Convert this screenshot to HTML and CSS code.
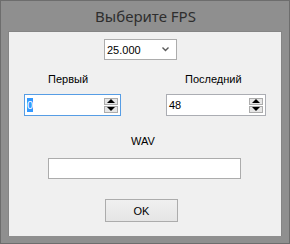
FILE: index.html
```html
<!DOCTYPE html>
<html>
<head>
    <title>Выберите FPS</title>
    <link rel="stylesheet" href="styles.css">
</head>
<body>
    <div class="window">
        <div class="title">Выберите FPS</div>
        <div class="client">
            <div class="combo-row">
                <div class="combo">
                    <span>25.000</span>
                    <svg class="chevron" width="7" height="5" viewBox="0 0 7 5">
                        <path d="M0.5 0.5 L3.5 3.5 L6.5 0.5" fill="none" stroke="#5a5a5a" stroke-width="1.4"/>
                    </svg>
                </div>
            </div>
            <div class="pair">
                <div class="label label-first">Первый</div>
                <div class="label label-last">Последний</div>
                <div class="spin focused">
                    <span class="value"><span class="selected">0</span></span>
                    <div class="arrows">
                        <div class="arrow up"></div>
                        <div class="arrow down"></div>
                    </div>
                </div>
                <div class="spin">
                    <span class="value">48</span>
                    <div class="arrows">
                        <div class="arrow up"></div>
                        <div class="arrow down"></div>
                    </div>
                </div>
            </div>
            <div class="wav-label">WAV</div>
            <div class="wav-row">
                <div class="wav-input"></div>
            </div>
            <div class="ok-row">
                <button class="ok">OK</button>
            </div>
        </div>
    </div>
</body>
</html>
```
FILE: styles.css
```css
body {
    margin: 0;
    background-color: #8f8f8f;
    font-family: "Liberation Sans", Arial, sans-serif;
    font-size: 11px;
    color: #000;
}
.window {
    width: 290px;
    height: 244px;
    box-sizing: border-box;
    background-color: #8f8f8f;
    border: 1px solid #6d6d6d;
    display: flex;
    flex-direction: column;
}
.title {
    height: 30px;
    line-height: 30px;
    text-align: center;
    font-family: "Noto Sans", sans-serif;
    font-size: 15px;
    color: #2e2e2e;
    padding-left: 1px;
}
.client {
    margin: 0 7px;
    height: 205px;
    box-sizing: border-box;
    background-color: #f0f0f0;
    border: 1px solid #858585;
    border-bottom: none;
    display: flex;
    flex-direction: column;
}
.combo-row {
    display: flex;
    padding-left: 95px;
    padding-top: 7px;
}
.combo {
    width: 73px;
    height: 21px;
    box-sizing: border-box;
    border: 1px solid #acacac;
    background-color: #fff;
    display: flex;
    align-items: center;
    justify-content: space-between;
    padding: 0 7px 0 2px;
}
.pair {
    display: grid;
    grid-template-columns: 97px 100px;
    column-gap: 45px;
    row-gap: 8px;
    padding-left: 15px;
    padding-top: 13px;
}
.label {
    height: 13px;
    line-height: 13px;
}
.label-first {
    padding-left: 24px;
}
.label-last {
    padding-left: 19px;
}
.spin {
    height: 22px;
    box-sizing: border-box;
    border: 1px solid #abadb3;
    background-color: #fff;
    display: flex;
    align-items: center;
    justify-content: space-between;
    padding: 0 2px 0 1px;
}
.spin.focused {
    border-color: #569de5;
}
.value {
    padding-left: 1px;
}
.selected {
    background-color: #3399ff;
    color: #fff;
    padding: 1px 0;
}
.arrows {
    display: flex;
    flex-direction: column;
    gap: 1px;
}
.arrow {
    width: 14px;
    height: 7px;
    box-sizing: border-box;
    border: 1px solid #acacac;
    background-color: #e6e6e6;
    display: flex;
    align-items: center;
    justify-content: center;
}
.arrow::after {
    content: "";
    width: 0;
    height: 0;
    border-left: 4px solid transparent;
    border-right: 4px solid transparent;
}
.arrow.up::after {
    border-bottom: 4px solid #000;
}
.arrow.down::after {
    border-top: 4px solid #000;
}
.wav-label {
    text-align: center;
    padding-top: 19px;
    padding-right: 4px;
    height: 13px;
    line-height: 13px;
}
.wav-row {
    display: flex;
    padding-left: 39px;
    padding-top: 10px;
}
.wav-input {
    width: 193px;
    height: 21px;
    box-sizing: border-box;
    border: 1px solid #acacac;
    background-color: #fff;
}
.ok-row {
    display: flex;
    padding-left: 96px;
    padding-top: 20px;
}
.ok {
    width: 73px;
    height: 23px;
    border: 1px solid #acacac;
    background: linear-gradient(#f0f0f0, #e5e5e5);
    font-family: "Liberation Sans", Arial, sans-serif;
    font-size: 11px;
    color: #000;
    padding: 0;
}
```
